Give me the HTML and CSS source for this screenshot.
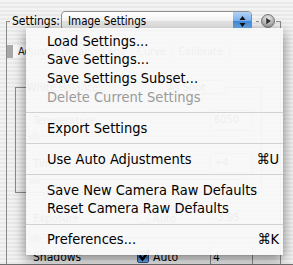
FILE: index.html
```html
<!DOCTYPE html>
<html>
<head>
<meta charset="utf-8">
<link rel="stylesheet" href="styles.css">
</head>
<body>
<div class="window">
  <fieldset class="group">
    <legend class="settings-bar">
      <span class="settings-label">Settings:</span>
      <span class="popup">
        <span class="popup-text">Image Settings</span>
        <span class="stepper">
          <svg width="19" height="20" viewBox="0 0 19 20">
            <path d="M6.5 9 L9.5 5 L12.5 9 Z" fill="#111"/>
            <path d="M6.5 12 L9.5 16 L12.5 12 Z" fill="#111"/>
          </svg>
        </span>
      </span>
      <span class="border-gap"></span>
      <span class="round-btn">
        <svg width="14" height="14" viewBox="0 0 14 14">
          <defs>
            <radialGradient id="rb" cx="0.5" cy="0.35" r="0.7">
              <stop offset="0" stop-color="#f2f2f2"/>
              <stop offset="1" stop-color="#8d8d8d"/>
            </radialGradient>
          </defs>
          <circle cx="7" cy="7" r="6.5" fill="url(#rb)" stroke="#7d7d7d"/>
          <path d="M5.2 3.8 L10 7 L5.2 10.2 Z" fill="#333"/>
        </svg>
      </span>
    </legend>

    <div class="tabs">
      <span class="tab-stub"></span>
      <span class="tab active">Adjust</span>
      <span class="tab">Detail</span>
      <span class="tab">Lens</span>
      <span class="tab">Curve</span>
      <span class="tab">Calibrate</span>
    </div>

    <fieldset class="wb">
      <legend class="wb-legend">
        <span>White Balance:</span>
        <span class="mini-popup">As Shot</span>
      </legend>
      <div class="row">
        <span class="row-label">Temperature</span>
        <span class="field">6050</span>
      </div>
      <div class="slider"><span class="thumb"></span></div>
      <div class="row">
        <span class="row-label">Tint</span>
        <span class="field">+4</span>
      </div>
      <div class="slider"><span class="thumb"></span></div>
    </fieldset>

    <div class="row exposure">
      <span class="row-label">Exposure</span>
      <span class="auto"><span class="check-empty"></span>Auto</span>
      <span class="field plain">-3.95</span>
    </div>
    <div class="slider wide"><span class="thumb"></span></div>

    <div class="shadows">
      <span class="row-label">Shadows</span>
      <span class="auto">
        <span class="checkbox">
          <svg width="14" height="14" viewBox="0 0 14 14">
            <path d="M2.5 6.5 L5.5 10.5 L12.5 1" fill="none" stroke="#000" stroke-width="2.4"/>
          </svg>
        </span>Auto
      </span>
      <span class="cell">4</span>
      <span class="cell"></span>
    </div>
  </fieldset>
</div>

<div class="menu">
  <div class="item"><span>Load Settings...</span></div>
  <div class="item"><span>Save Settings...</span></div>
  <div class="item"><span>Save Settings Subset...</span></div>
  <div class="item disabled"><span>Delete Current Settings</span></div>
  <div class="sep"></div>
  <div class="item"><span>Export Settings</span></div>
  <div class="sep"></div>
  <div class="item"><span>Use Auto Adjustments</span><span class="key">⌘U</span></div>
  <div class="sep"></div>
  <div class="item"><span>Save New Camera Raw Defaults</span></div>
  <div class="item"><span>Reset Camera Raw Defaults</span></div>
  <div class="sep"></div>
  <div class="item"><span>Preferences...</span><span class="key">⌘K</span></div>
</div>
</body>
</html>
```

FILE: styles.css
```css
* { box-sizing: border-box; }

html, body { margin: 0; padding: 0; }

body {
  width: 293px;
  height: 265px;
  overflow: hidden;
  position: relative;
  background: repeating-linear-gradient(to bottom, #f3f3f3 0, #f3f3f3 2px, #e9e9e9 2px, #e9e9e9 4px);
  font-family: "DejaVu Sans Condensed", "DejaVu Sans", sans-serif;
  color: #000;
}

.window {
  height: 265px;
  overflow: hidden;
  border-bottom: 1px solid #6f6f6f;
}

/* outer settings group box */
.group {
  margin: 11px 0 0 6px;
  width: 275px;
  height: 300px;
  padding: 0;
  min-width: 0;
  border: 1px solid #8a8a8a;
}

.settings-bar {
  margin-left: 3px;
  padding: 0 1px;
  height: 20px;
  display: flex;
  align-items: center;
  font-size: 12px;
}

.settings-label {
  width: 50px;
  padding-left: 1px;
}

.popup {
  width: 191px;
  height: 20px;
  display: flex;
  align-items: center;
  justify-content: space-between;
  border: 1px solid #8f8f8f;
  border-radius: 4px;
  background: linear-gradient(#ffffff, #f4f4f4 50%, #e4e4e4 51%, #f2f2f2);
  overflow: hidden;
  font-size: 11.5px;
}

.popup-text {
  padding-left: 6px;
}

.stepper {
  width: 19px;
  height: 20px;
  margin-right: -1px;
  border-radius: 0 4px 4px 0;
  background: linear-gradient(#b8d6f7, #7cb2ee 50%, #3f86dc 51%, #86c1f5);
  display: flex;
}

.border-gap {
  width: 3px;
  height: 1px;
  margin: 0 2px 0 4px;
  background: #8a8a8a;
}

.round-btn {
  width: 14px;
  height: 14px;
  display: flex;
}

/* tabs */
.tabs {
  margin-top: 14px;
  height: 13px;
  display: flex;
  font-size: 11px;
  line-height: 13px;
  color: #222;
}

.tab-stub {
  width: 5px;
  background: #a9a9a9;
}

.tab {
  padding: 0 6px 0 5px;
  border-right: 1px solid #999;
}

.tab.active {
  background: #fbfbfb;
  border-left: 1px solid #aaa;
}

/* white balance group */
.wb {
  margin: 22px 18px 0 8px;
  height: 113px;
  padding: 0;
  min-width: 0;
  border: 1px solid #8a8a8a;
}

.wb-legend {
  margin-left: 11px;
  padding: 0;
  height: 14px;
  display: flex;
  align-items: center;
  font-size: 11px;
}

.mini-popup {
  margin-left: 60px;
  width: 64px;
  height: 14px;
  padding-left: 5px;
  border: 1px solid #999;
  border-radius: 3px;
  background: #f6f6f6;
}

.row {
  display: grid;
  grid-template-columns: 177px 42px;
  align-items: center;
  height: 20px;
  margin-top: 16px;
  padding-left: 17px;
  font-size: 11px;
}

.field {
  height: 20px;
  line-height: 18px;
  padding-left: 3px;
  border: 1px solid #999;
  background: #fff;
}

.field.plain {
  border-color: transparent;
  background: transparent;
}

.slider {
  position: relative;
  height: 1px;
  margin: 6px 20px 0 12px;
  background: #888;
}

.thumb {
  position: absolute;
  left: 2px;
  top: -4px;
  width: 10px;
  height: 9px;
  background: #999;
  clip-path: polygon(50% 0, 100% 45%, 100% 100%, 0 100%, 0 45%);
}

.exposure {
  grid-template-columns: 104px 73px 42px;
  margin-top: 15px;
  padding-left: 26px;
}

.auto {
  display: flex;
  align-items: center;
  gap: 4px;
}

.check-empty {
  width: 12px;
  height: 12px;
  border: 1px solid #888;
  background: #fff;
  border-radius: 2px;
}

.slider.wide {
  margin: 9px 20px 0 22px;
}

/* shadows row */
.shadows {
  display: grid;
  grid-template-columns: 104px 73px 42px 1fr;
  align-items: center;
  height: 20px;
  margin-top: 9px;
  padding-left: 26px;
  font-size: 12px;
}

.checkbox {
  position: relative;
  width: 12px;
  height: 12px;
  border: 1px solid #2b4f8c;
  border-radius: 2px;
  background: linear-gradient(#9cc6f3, #3c7fd6 55%, #76b1ee);
}

.checkbox svg {
  position: absolute;
  left: -1px;
  top: -3px;
}

.cell {
  align-self: stretch;
  border-left: 1px solid #8a8a8a;
  padding-left: 2px;
  line-height: 20px;
}

/* dropdown menu */
.menu {
  position: absolute;
  left: 26px;
  top: 28px;
  width: 257px;
  height: 227px;
  padding-top: 3.8px;
  background: rgba(248, 248, 248, 0.955);
  box-shadow: 0 4px 12px rgba(0, 0, 0, 0.5);
  font-size: 14.5px;
}

.item {
  display: flex;
  justify-content: space-between;
  height: 18.7px;
  line-height: 18.7px;
  padding: 0 4px 0 21px;
  white-space: nowrap;
}

.item.disabled {
  color: #9a9a9a;
}

.sep {
  height: 1px;
  margin: 5.65px 0;
  background: #d2d2d2;
}
```
